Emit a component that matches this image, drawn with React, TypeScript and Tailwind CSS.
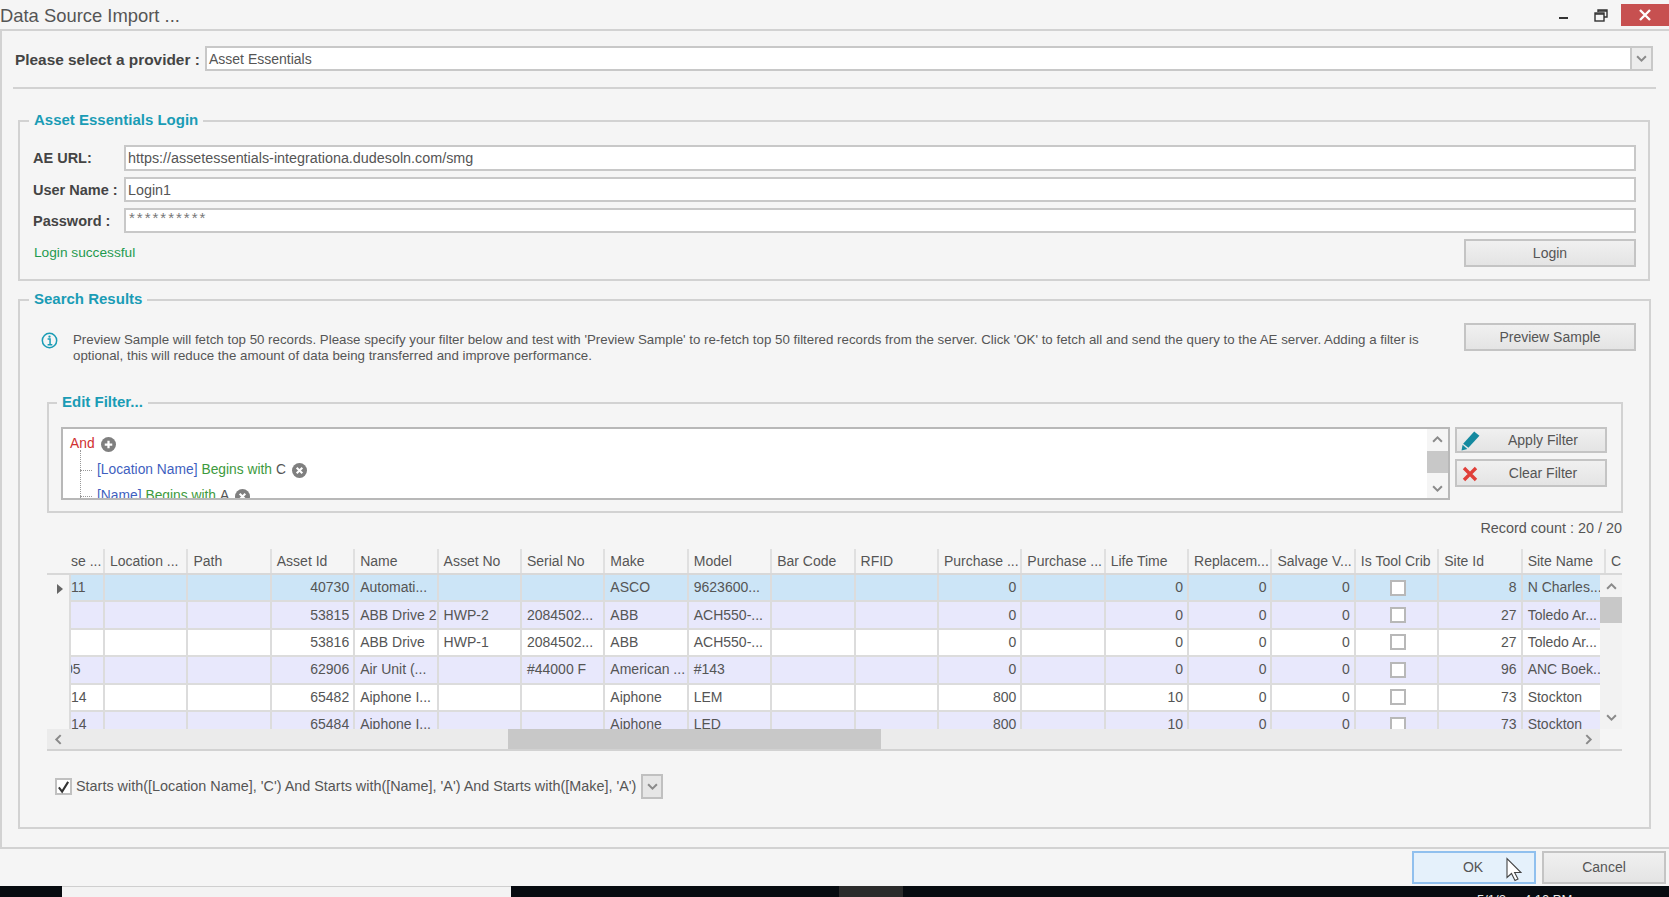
import React from "react";

const FONT = "font-['Liberation_Sans',Arial,sans-serif]";
const LEG = "px-[5px] pb-[3px] text-[15px] leading-[17px] font-bold text-[#1a9cb5]";

function Button({ className = "", children }: { className?: string; children: React.ReactNode }) {
  return (
    <div className={`flex items-center justify-center border-2 border-[#c4c4c4] bg-gradient-to-b from-[#f0f0f0] to-[#e4e4e4] text-[14px] text-[#555] ${className}`}>
      {children}
    </div>
  );
}

function Field({ label, value, h, mt, pw }: { label: string; value: string; h: number; mt: string; pw?: boolean }) {
  return (
    <div className={`flex items-center ${mt}`}>
      <div className="w-[91px] shrink-0 pt-[2px] text-[14.5px] font-bold text-[#444]">{label}</div>
      {pw ? (
        <div className="grow border-2 border-[#c8c8c8] bg-white pl-[3px] text-[15px] leading-[16px] tracking-[2px] text-[#777]" style={{ height: h }}>
          {value}
        </div>
      ) : (
        <div className="flex grow items-center border-2 border-[#c8c8c8] bg-white pl-[2px] pt-[2px] text-[14.35px] text-[#555]" style={{ height: h }}>
          {value}
        </div>
      )}
    </div>
  );
}

function Chevron({ dir = "down", className = "" }: { dir?: "up" | "down" | "left" | "right"; className?: string }) {
  const d = {
    down: "M1 3 L5 7 L9 3",
    up: "M1 7 L5 3 L9 7",
    left: "M7 1 L3 5 L7 9",
    right: "M3 1 L7 5 L3 9",
  }[dir];
  return (
    <svg viewBox="0 0 10 10" className={`h-[11px] w-[11px] ${className}`} fill="none" stroke="#8a8a8a" strokeWidth="1.8">
      <path d={d} />
    </svg>
  );
}

function RoundIcon({ plus }: { plus?: boolean }) {
  return (
    <svg viewBox="0 0 16 16" className="ml-[6px] h-[15px] w-[15px] shrink-0">
      <circle cx="8" cy="8" r="8" fill="#7f7f7f" />
      {plus ? (
        <path d="M8 4 V12 M4 8 H12" stroke="#fff" strokeWidth="2.4" />
      ) : (
        <path d="M5 5 L11 11 M11 5 L5 11" stroke="#fff" strokeWidth="2.2" />
      )}
    </svg>
  );
}

const COLS = ["Location ...", "Path", "Asset Id", "Name", "Asset No", "Serial No", "Make", "Model", "Bar Code", "RFID", "Purchase ...", "Purchase ...", "Life Time", "Replacem...", "Salvage V...", "Is Tool Crib", "Site Id", "Site Name"];

const ROWS: { lead: string; id: string; name: string; no: string; serial: string; make: string; model: string; pc: string; life: string; sid: string; site: string; bg: string }[] = [
  { lead: "11", id: "40730", name: "Automati...", no: "", serial: "", make: "ASCO", model: "9623600...", pc: "0", life: "0", sid: "8", site: "N Charles...", bg: "bg-[#cce5f7]" },
  { lead: "", id: "53815", name: "ABB Drive 2", no: "HWP-2", serial: "2084502...", make: "ABB", model: "ACH550-...", pc: "0", life: "0", sid: "27", site: "Toledo Ar...", bg: "bg-[#e8e8fc]" },
  { lead: "", id: "53816", name: "ABB Drive", no: "HWP-1", serial: "2084502...", make: "ABB", model: "ACH550-...", pc: "0", life: "0", sid: "27", site: "Toledo Ar...", bg: "bg-white" },
  { lead: "05", id: "62906", name: "Air Unit (...", no: "", serial: "#44000 F", make: "American ...", model: "#143", pc: "0", life: "0", sid: "96", site: "ANC Boek...", bg: "bg-[#e8e8fc]" },
  { lead: "14", id: "65482", name: "Aiphone I...", no: "", serial: "", make: "Aiphone", model: "LEM", pc: "800", life: "10", sid: "73", site: "Stockton", bg: "bg-white" },
  { lead: "14", id: "65484", name: "Aiphone I...", no: "", serial: "", make: "Aiphone", model: "LED", pc: "800", life: "10", sid: "73", site: "Stockton", bg: "bg-[#e8e8fc]" },
];

const GRID = "grid grid-cols-[34px_repeat(18,83.4px)_16px]";

function Cell({ right, children }: { right?: boolean; children?: React.ReactNode }) {
  return (
    <div className={`flex h-full items-center overflow-hidden whitespace-nowrap border-r-2 border-[#dcdcdc] pl-[5px] pr-[4px] text-[14px] text-[#555] ${right ? "justify-end" : ""}`}>
      {children}
    </div>
  );
}

export default function App() {
  return (
    <div className={`${FONT} flex h-[897px] w-[1669px] flex-col overflow-hidden bg-[#f5f5f5] text-[#555]`}>
      {/* title bar */}
      <div className="flex h-[29px] shrink-0 items-center justify-between">
        <div className="pt-[2px] text-[18.4px] leading-[29px] text-[#555]">Data Source Import ...</div>
        <div className="flex h-full items-start">
          <div className="mt-[17px] h-[2px] w-[9px] bg-[#333]" />
          <svg viewBox="0 0 14 13" className="ml-[26px] mt-[9px] h-[13px] w-[14px]" fill="none" stroke="#333" strokeWidth="1.4">
            <path d="M4 3 V1 H13 V8 H10" />
            <rect x="1" y="4" width="9" height="8" />
            <path d="M1 5 H10 M4 2 H13" />
          </svg>
          <div className="ml-[13px] mt-[4px] flex h-[22px] w-[48px] items-center justify-center bg-[#c75050]">
            <svg viewBox="0 0 12 12" className="h-[12px] w-[12px]" stroke="#fff" strokeWidth="2.4">
              <path d="M1 1 L11 11 M11 1 L1 11" />
            </svg>
          </div>
        </div>
      </div>

      {/* body */}
      <div className="flex h-[820px] shrink-0 flex-col border-y-2 border-l-2 border-[#d2d2d2] pl-[11px] pt-[15px]">
        <div className="flex h-[25px] items-center pr-[16px]">
          <div className="ml-[2px] w-[190px] shrink-0 pt-[2px] text-[15.4px] font-bold text-[#444]">Please select a provider :</div>
          <div className="flex h-full grow items-center border-2 border-[#c8c8c8] bg-white pl-[2px] text-[14px] text-[#555]">
            <span className="grow pt-[2px]">Asset Essentials</span>
            <div className="flex h-full w-[21px] items-center justify-center border-l-2 border-[#c8c8c8] bg-[#ececec]">
              <Chevron />
            </div>
          </div>
        </div>
        <div className="mr-[13px] mt-[16px] h-[2px] bg-[#d2d2d2]" />

        {/* login */}
        <fieldset className="ml-[5px] mr-[19px] mt-[22px] h-[170px] shrink-0 border-2 border-[#d2d2d2] pl-[13px] pr-[12px]">
          <legend className={`ml-[-4px] ${LEG}`}>Asset Essentials Login</legend>
          <Field label="AE URL:" value="https://assetessentials-integrationa.dudesoln.com/smg" h={26} mt="mt-[14px]" />
          <Field label="User Name :" value="Login1" h={25} mt="mt-[6px]" />
          <Field label="Password :" value="**********" h={25} mt="mt-[6px]" pw />
          <div className="mt-[6px] flex h-[28px] items-center justify-between">
            <span className="ml-[1px] text-[13.7px] text-[#1f9a4f]">Login successful</span>
            <Button className="h-full w-[172px]">Login</Button>
          </div>
        </fieldset>

        {/* search results */}
        <fieldset className="ml-[5px] mr-[19px] mt-[9px] h-[539px] shrink-0 border-2 border-[#d2d2d2] px-[27px]">
          <legend className={`ml-[-18px] ${LEG}`}>Search Results</legend>
          <div className="ml-[-14px] mr-[-14px] mt-[13px] flex h-[40px] items-start">
            <svg viewBox="0 0 18 18" className="ml-[8px] mt-[9px] h-[17px] w-[17px] shrink-0" fill="none">
              <circle cx="9" cy="9" r="7.6" stroke="#1a9cb5" strokeWidth="1.6" />
              <path d="M7 7.5 H9.6 V13 M7 13.4 H12" stroke="#1a9cb5" strokeWidth="1.6" />
              <circle cx="9" cy="4.9" r="1.2" fill="#1a9cb5" />
            </svg>
            <div className="ml-[15px] mt-[9px] w-[1346px] text-[13.3px] leading-[16px] text-[#555]">
              Preview Sample will fetch top 50 records. Please specify your filter below and test with 'Preview Sample' to re-fetch top 50 filtered records from the server. Click 'OK' to fetch all and send the query to the AE server. Adding a filter is optional, this will reduce the amount of data being transferred and improve performance.
            </div>
            <Button className="ml-auto h-[28px] w-[172px] shrink-0">Preview Sample</Button>
          </div>

          {/* edit filter */}
          <fieldset className="mr-[-1px] mt-[30px] h-[120px] shrink-0 border-2 border-[#d2d2d2] pl-[12px] pr-[13px]">
            <legend className={`ml-[-4px] ${LEG}`}>Edit Filter...</legend>
            <div className="mt-[14px] flex h-[84px] items-start">
              <div className="flex h-[73px] w-[1389px] shrink-0 border-2 border-[#b8b8b8] bg-white">
                <div className="h-full grow overflow-hidden pl-[7px] pt-[5px] text-[13.8px]">
                  <div className="flex h-[20px] items-center">
                    <span className="text-[#d03030]">And</span>
                    <RoundIcon plus />
                  </div>
                  <div className="relative mt-[6px] flex h-[20px] items-center pl-[27px]">
                    <span className="text-[#3f5fc0]">[Location Name]</span>
                    <span className="ml-[4px] text-[#3d9a3d]">Begins with</span>
                    <span className="ml-[4px] text-[#555]">C</span>
                    <RoundIcon />
                    <div className="absolute left-[10px] top-[-10px] h-[50px] border-l border-dotted border-[#999]" />
                    <div className="absolute left-[10px] top-[10px] w-[12px] border-t border-dotted border-[#999]" />
                  </div>
                  <div className="relative mt-[6px] flex h-[20px] items-center pl-[27px]">
                    <span className="text-[#3f5fc0]">[Name]</span>
                    <span className="ml-[4px] text-[#3d9a3d]">Begins with</span>
                    <span className="ml-[4px] text-[#555]">A</span>
                    <RoundIcon />
                    <div className="absolute left-[10px] top-[10px] w-[12px] border-t border-dotted border-[#999]" />
                  </div>
                </div>
                <div className="flex h-full w-[21px] shrink-0 flex-col items-center bg-[#f5f5f5] pt-[5px]">
                  <Chevron dir="up" />
                  <div className="mt-[6px] h-[22px] w-full bg-[#c8c8c8]" />
                  <Chevron dir="down" className="mt-auto mb-[4px]" />
                </div>
              </div>
              <div className="ml-[5px] flex w-[152px] shrink-0 flex-col gap-[6px]">
                <Button className="relative h-[26px] w-full">
                  <svg viewBox="0 0 20 20" className="absolute left-[3px] top-[1px] h-[21px] w-[21px]">
                    <path d="M13.5 1.5 L18.5 5.5 L8 17 L3 13 Z" fill="#14899f" />
                    <path d="M2.5 14 L7 18 L1.5 19.5 Z" fill="#14899f" />
                  </svg>
                  <span className="ml-[24px]">Apply Filter</span>
                </Button>
                <Button className="relative h-[28px] w-full">
                  <svg viewBox="0 0 16 16" className="absolute left-[5px] top-[5px] h-[16px] w-[16px]" stroke="#e0403a" strokeWidth="3.4">
                    <path d="M2 2 L14 14 M14 2 L2 14" />
                  </svg>
                  <span className="ml-[24px]">Clear Filter</span>
                </Button>
              </div>
            </div>
          </fieldset>

          <div className="mt-[5px] text-right text-[14.4px] leading-[20px] text-[#555]">Record count : 20 / 20</div>

          {/* grid */}
          <div className="mt-[11px] h-[202px] w-[1575px] shrink-0 overflow-hidden">
            <div className="flex h-[26px] border-b-2 border-[#d8d8d8]">
              <div className="w-[24px] shrink-0" />
              <div className={`${GRID} w-[1551px] shrink-0`}>
                {["se ...", ...COLS, "C"].map((c, i) => (
                  <div key={i} className={`flex items-center overflow-hidden whitespace-nowrap text-[14px] text-[#555] ${i === 0 ? "pl-[0px]" : "pl-[5px]"} ${i < 19 ? "border-r-2 border-[#e0e0e0]" : ""}`}>
                    {c}
                  </div>
                ))}
              </div>
            </div>
            <div className="flex h-[154px]">
              <div className="w-[24px] shrink-0 border-r-2 border-[#dcdcdc] pl-[10px] pt-[9px]">
                <svg viewBox="0 0 6 10" className="h-[10px] w-[6px]"><path d="M0 0 L6 5 L0 10 Z" fill="#666" /></svg>
              </div>
              <div className="h-full w-[1529px] shrink-0 overflow-hidden">
                {ROWS.map((r, i) => (
                  <div key={i} className={`${GRID} h-[27.4px] w-[1551px] border-b-2 border-[#dcdcdc] ${r.bg}`}>
                    <div className="flex items-center overflow-hidden border-r-2 border-[#dcdcdc] text-[14px]">
                      <span className={r.lead === "05" ? "ml-[-6px]" : ""}>{r.lead}</span>
                    </div>
                    <Cell />
                    <Cell />
                    <Cell right>{r.id}</Cell>
                    <Cell>{r.name}</Cell>
                    <Cell>{r.no}</Cell>
                    <Cell>{r.serial}</Cell>
                    <Cell>{r.make}</Cell>
                    <Cell>{r.model}</Cell>
                    <Cell />
                    <Cell />
                    <Cell right>{r.pc}</Cell>
                    <Cell />
                    <Cell right>{r.life}</Cell>
                    <Cell right>0</Cell>
                    <Cell right>0</Cell>
                    <div className="flex h-full items-center justify-center border-r-2 border-[#dcdcdc] pl-[2px]">
                      <div className="h-[16px] w-[16px] border-2 border-[#b8b8b8] bg-white" />
                    </div>
                    <Cell right>{r.sid}</Cell>
                    <Cell>{r.site}</Cell>
                    <div />
                  </div>
                ))}
              </div>
              <div className="flex h-full w-[22px] shrink-0 flex-col items-center bg-[#f2f2f2] pt-[6px]">
                <Chevron dir="up" />
                <div className="mt-[5px] h-[26px] w-full bg-[#c8c8c8]" />
                <Chevron dir="down" className="mt-auto mb-[6px]" />
              </div>
            </div>
            <div className="flex h-[22px] border-b-2 border-[#d2d2d2]">
              <div className="flex h-full w-[1553px] shrink-0 items-center bg-[#ebebeb] px-[6px]">
                <Chevron dir="left" />
                <div className="ml-[444px] h-full w-[373px] bg-[#c8c8c8]" />
                <Chevron dir="right" className="ml-auto" />
              </div>
            </div>
          </div>

          {/* active filter */}
          <div className="ml-[8px] mt-[23px] flex h-[25px] items-center">
            <div className="flex h-[17px] w-[17px] items-center justify-center border-2 border-[#c0c0c0] bg-white">
              <svg viewBox="0 0 14 14" className="h-[14px] w-[14px]" fill="none" stroke="#333" strokeWidth="2.2">
                <path d="M2 7.5 L5.5 12 L12 1.5" />
              </svg>
            </div>
            <span className="ml-[4px] w-[565px] whitespace-nowrap text-[14.4px] text-[#555]">Starts with([Location Name], 'C') And Starts with([Name], 'A') And Starts with([Make], 'A')</span>
            <div className="flex h-[25px] w-[22px] items-center justify-center border-2 border-[#c0c0c0] bg-[#e6e6e6]">
              <Chevron />
            </div>
          </div>
        </fieldset>
      </div>

      {/* footer */}
      <div className="flex h-[37px] shrink-0 items-start justify-end gap-[6px] pr-[3px] pt-[2px]">
        <div className="relative flex h-[33px] w-[124px] items-center justify-center border-2 border-[#90c0ee] bg-[#e5f1fb] text-[14px] text-[#555]">
          <span className="mr-[2px]">OK</span>
          <svg viewBox="0 0 16 24" className="absolute left-[92px] top-[4px] h-[25px] w-[16px]">
            <path d="M1 1 V20 L5.5 16 L9 23 L12 21.5 L8.6 15 L15 15 Z" fill="#fff" stroke="#444" strokeWidth="1.1" />
          </svg>
        </div>
        <Button className="h-[33px] w-[124px]">Cancel</Button>
      </div>

      {/* taskbar strip */}
      <div className="flex h-[11px] shrink-0 overflow-hidden bg-[#070b10]">
        <div className="ml-[62px] h-full w-[449px] border-t border-[#cfcfcf] bg-[#f3f3f3]" />
        <div className="ml-[328px] h-full w-[64px] bg-[#2b2b2b]" />
        <div className="ml-[574px] whitespace-nowrap pt-[7px] text-[13px] leading-[14px] text-[#e8e8e8]">
          <span>5/1/2</span>
          <span className="ml-[18px]">4:10 PM</span>
        </div>
      </div>
    </div>
  );
}
